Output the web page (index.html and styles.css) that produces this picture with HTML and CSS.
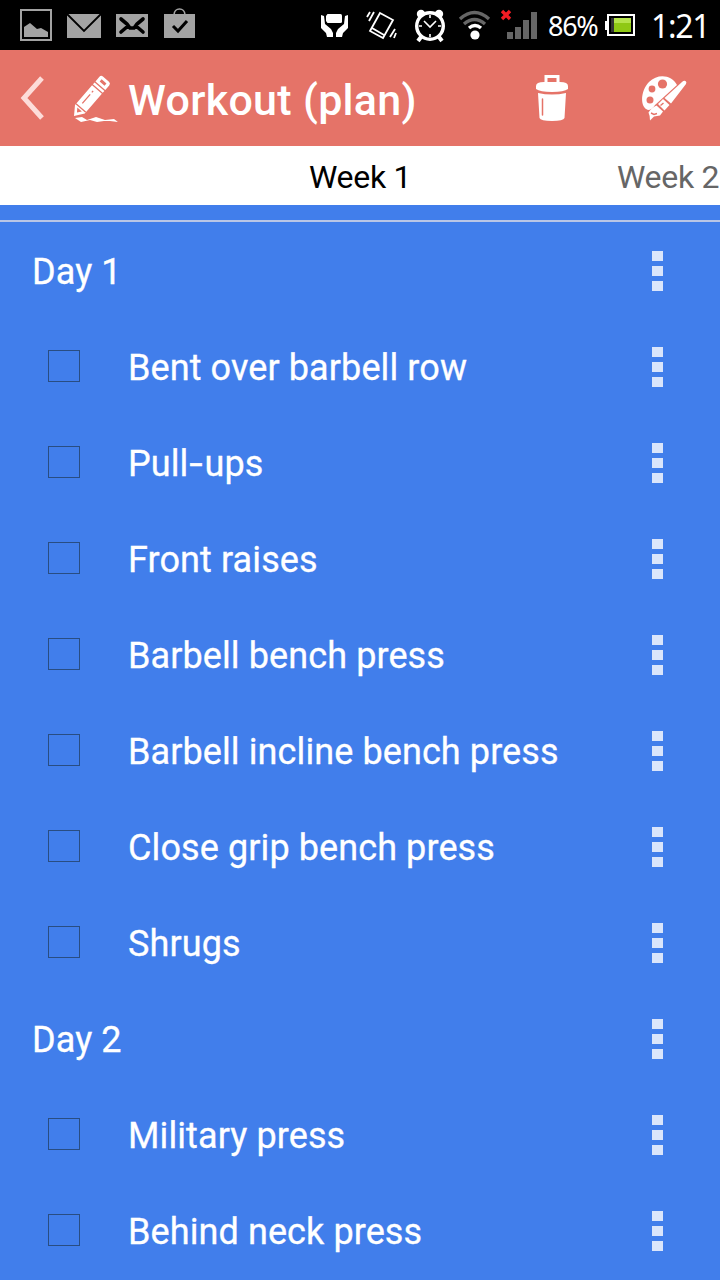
FILE: index.html
```html
<!doctype html>
<html lang="en">
  <head>
    <meta charset="utf-8">
    <title>Workout (plan)</title>
    <link rel="stylesheet" href="styles.css">
  </head>
  <body>
    <div class="status-bar">
      <svg class="status-icons" width="200" height="50" viewBox="0 0 200 50">
        <g fill="#a3a3a3">
          <path d="M21 10h30v30H21z" fill="none" stroke="#a3a3a3" stroke-width="2"/>
          <path d="M24 37v-10l6-4 7 6 4-1 7 4v5z"/>
          <path d="M67 14h34v24H67z"/>
          <path d="M116 14h32v23h-32z"/>
          <path d="M164 14h31v24h-31z"/>
        </g>
        <path d="M67 14l17 17 17-17" fill="none" stroke="#000" stroke-width="1.8"/>
        <path d="M121 19l6 5 3 4h4l3-4 6-5M121 32l7-6M143 32l-7-6" fill="none" stroke="#000" stroke-width="3.6" stroke-linecap="round"/>
        <path d="M174 15c0-8 11-8 11 0" fill="none" stroke="#a3a3a3" stroke-width="1.7"/>
        <path d="M173 26l5 5 9-10" fill="none" stroke="#000" stroke-width="3"/>
      </svg>
      <svg class="status-icons" width="225" height="50" viewBox="315 0 225 50">
        <g fill="#fff">
          <path d="M326 16l1.500-2h13q1.500 0 1.500 1.500v6q0 1.500-1.500 1.500h-13l-1.500-2z"/>
          <path d="M321 15l3 1 1 8 6 5 2 4v4h-6l-1-4-5-5z"/>
          <path d="M348 15l-3 1-1 8-6 5-2 4v4h6l1-4 5-5z"/>
        </g>
        <g fill="none" stroke="#fff" stroke-width="1.8">
          <path d="M380 13l13 7-10 18-13-7zM372 28l12 7"/>
          <path d="M370 12l-3 5M374 12l-5 9M390 37l5-8M394 38l2-5"/>
        </g>
        <circle cx="421" cy="14" r="4.200" fill="#fff"/>
        <circle cx="439" cy="14" r="4.200" fill="#fff"/>
        <path d="M421 37l-3 4M439 37l3 4" stroke="#fff" stroke-width="4"/>
        <circle cx="430" cy="26" r="13.300" fill="#000" stroke="#fff" stroke-width="3.400"/>
        <path d="M424 21l6 6 6-6M430 15v3M430 34v3M419 26h3M438 26h3" fill="none" stroke="#fff" stroke-width="1.600"/>
        <g fill="none" stroke-width="3.400">
          <path d="M460 19q14.500-13 29 0M464 24q10.500-9 21 0" stroke="#666"/>
          <path d="M469 28q6-5 12 0" stroke="#fff"/>
        </g>
        <circle cx="475" cy="35" r="4.600" fill="#fff"/>
        <path d="M502 11l8 8M510 11l-8 8" stroke="#f51c24" stroke-width="3.400"/>
        <path d="M507 32h6v7h-6zM515 27h6v12h-6zM523 20h6v19h-6zM531 12h6v27h-6z" fill="#666"/>
      </svg>
      <span class="percent">86%</span>
      <svg class="battery" width="32" height="24" viewBox="604 14 32 24">
        <path d="M608 16h26v20h-26z" fill="#000" stroke="#fff" stroke-width="2"/>
        <path d="M605 22h3v9h-3z" fill="#fff"/>
        <path d="M611 19h3v14h-3z" fill="#333"/>
        <path d="M614 19h17v14h-17z" fill="#8fc814"/>
        <path d="M614 19h17v5h-17z" fill="#b5e34b"/>
      </svg>
      <span class="clock">1:21</span>
    </div>

    <div class="header">
      <svg class="back" width="24" height="46" viewBox="20 75 24 46">
        <path d="M42 78L24 98l18 20" fill="none" stroke="#fddcd9" stroke-width="5"/>
      </svg>
      <svg class="pencil" width="48" height="50" viewBox="72 72 48 50">
        <g transform="translate(74 115) rotate(-49)">
          <path d="M0 0l9-6.500h26v13H9zM36.300-6.500h2.600v13h-2.600zM40.200-6.500h6q2.500 0 2.500 2.500v8q0 2.500-2.500 2.500h-6z" fill="#fff"/>
          <path d="M4.500 0l4-3v6zM42.800-3.200h3v6.400h-3z" fill="#e57368"/>
          <path d="M10.500-6.500v13M15-2h12M29.500-2h2" stroke="#e57368" stroke-width="1.300"/>
        </g>
        <path d="M75 117l7-1 5 3 9-3 9 3 9-1 4 3-8-1-6 0-7 1-7-2-9 2z" fill="#fff"/>
      </svg>
      <h1 class="title">Workout (plan)</h1>
      <svg class="trash" width="34" height="48" viewBox="535 74 34 48">
        <path d="M546 84v-7.500h12v7.500" fill="none" stroke="#fff" stroke-width="3"/>
        <path d="M536 86q0-4 8-4h16q8 0 8 4v3q-4 3-16 3t-16-3z" fill="#fff"/>
        <path d="M538 93q14 3 28 0l-1.500 25q-1 3-12.500 3t-12.500-3z" fill="#fff"/>
        <path d="M542.500 99v16" stroke="#e57368" stroke-width="1.500" stroke-linecap="round"/>
      </svg>
      <svg class="palette" width="48" height="48" viewBox="640 74 48 48">
        <path d="M648 110c-9-3-7-20 1-28 9-9 23-7 28 3L655 105q-3 5-7 5z" fill="#fff"/>
        <circle cx="662.500" cy="84" r="4.600" fill="#e57368"/>
        <circle cx="652" cy="89" r="3.400" fill="#e57368"/>
        <circle cx="650" cy="100" r="3.500" fill="#e57368"/>
        <path d="M664.500 98l17.500-16q2-2 3.500-1t.5 3L671 103.500zM658 104l5-5 6.500 6-5 5.500zM656.500 105.500l6.500 6-3 4-6 1-4 4q0-5-1.500-8 3-5 8-7z" fill="#fff"/>
        <path d="M660.500 105.500l3-2.500M651 113l3 1.500 3-1" fill="none" stroke="#e57368" stroke-width="1.400"/>
      </svg>
    </div>

    <div class="tabs">
      <span class="tab active">Week 1</span>
      <span class="tab next">Week 2</span>
    </div>

    <div class="list">
      <div class="row day"><span class="name">Day 1</span><span class="menu"><i></i><i></i><i></i></span></div>
      <div class="row"><span class="check"></span><span class="name">Bent over barbell row</span><span class="menu"><i></i><i></i><i></i></span></div>
      <div class="row"><span class="check"></span><span class="name">Pull<span class="hyphen">-</span>ups</span><span class="menu"><i></i><i></i><i></i></span></div>
      <div class="row"><span class="check"></span><span class="name">Front raises</span><span class="menu"><i></i><i></i><i></i></span></div>
      <div class="row"><span class="check"></span><span class="name">Barbell bench press</span><span class="menu"><i></i><i></i><i></i></span></div>
      <div class="row"><span class="check"></span><span class="name">Barbell incline bench press</span><span class="menu"><i></i><i></i><i></i></span></div>
      <div class="row"><span class="check"></span><span class="name">Close grip bench press</span><span class="menu"><i></i><i></i><i></i></span></div>
      <div class="row"><span class="check"></span><span class="name">Shrugs</span><span class="menu"><i></i><i></i><i></i></span></div>
      <div class="row day"><span class="name">Day 2</span><span class="menu"><i></i><i></i><i></i></span></div>
      <div class="row"><span class="check"></span><span class="name">Military press</span><span class="menu"><i></i><i></i><i></i></span></div>
      <div class="row"><span class="check"></span><span class="name">Behind neck press</span><span class="menu"><i></i><i></i><i></i></span></div>
    </div>
  </body>
</html>
```
FILE: styles.css
```css
* {
  box-sizing: border-box;
}

body {
  margin: 0;
  width: 720px;
  height: 1280px;
  overflow: hidden;
  background-color: #417eeb;
  font-family: Roboto, sans-serif;
}

svg {
  display: block;
  flex: none;
}

.status-bar {
  display: flex;
  align-items: center;
  height: 50px;
  background-color: #000;
  color: #fff;
  white-space: nowrap;
}

.status-icons + .status-icons {
  margin-left: 115px;
}

.percent {
  width: 56px;
  margin-left: 8px;
  padding-top: 1px;
  font-family: "Noto Sans", sans-serif;
  font-size: 27px;
  letter-spacing: -1.3px;
}

.battery {
  margin-left: 0;
}

.clock {
  margin-left: 15px;
  font-family: "Noto Sans", sans-serif;
  font-size: 32px;
  letter-spacing: -1.3px;
}

.header {
  display: flex;
  align-items: center;
  height: 96px;
  padding-left: 20px;
  background-color: #e57368;
  color: #fff;
}

.pencil {
  margin-left: 28px;
}

.title {
  width: 407px;
  margin: 3px 0 0 8px;
  font-size: 43px;
  font-weight: 500;
  line-height: 50px;
  letter-spacing: 0.3px;
}

.palette {
  margin-left: 71px;
}

.tabs {
  display: flex;
  align-items: center;
  height: 59px;
  padding: 2px 0 0 309px;
  background-color: #fff;
  font-size: 32px;
  letter-spacing: -0.3px;
  white-space: nowrap;
}

.tab {
  flex: none;
  color: #666;
}

.tab.active {
  width: 308px;
  color: #000;
}

.list {
  margin-top: 15px;
  border-top: 2px solid #b9c6e6;
}

.row {
  display: flex;
  align-items: center;
  height: 96px;
  padding: 0 57px 0 48px;
  color: #fff;
  font-size: 36px;
  letter-spacing: 0.1px;
}

.row.day {
  padding-left: 32px;
}

.check {
  width: 32px;
  height: 32px;
  margin-right: 48px;
  border: 1px solid #294d82;
}

.name {
  padding-top: 4px;
  white-space: nowrap;
  -webkit-text-stroke: 0.3px #fff;
}

.hyphen {
  display: inline-block;
  margin: 0 3px;
  transform: scaleX(1.35);
}

.menu {
  display: flex;
  flex-direction: column;
  gap: 5px;
  margin: 2px 0 0 auto;
}

.menu i {
  width: 11px;
  height: 10px;
  background-color: #dae5fb;
}
```
